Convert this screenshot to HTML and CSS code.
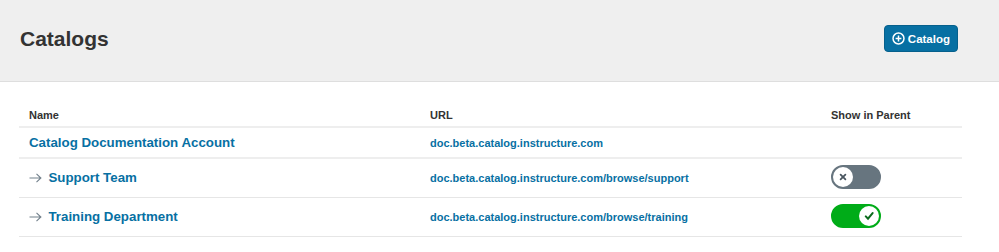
FILE: index.html
```html
<!DOCTYPE html>
<html lang="en">
<head>
    <meta charset="UTF-8">
    <meta name="viewport" content="width=device-width, initial-scale=1.0">
    <title>Catalogs</title>
    <link rel="stylesheet" href="styles.css">
</head>
<body>
    <!-- PAGE HEADER -->
    <div class="page-header">
        <h1>Catalogs</h1>
        <button type="button" class="btn">
            <svg class="btn-icon" viewBox="0 0 14 14" width="13" height="13">
                <circle cx="7" cy="7" r="5.9" fill="none" stroke="#fff" stroke-width="1.6"/>
                <path d="M7 3.9v6.2M3.9 7h6.2" stroke="#fff" stroke-width="1.6"/>
            </svg>
            Catalog
        </button>
    </div>

    <!-- CATALOG LIST -->
    <div class="content">
        <table class="catalogs">
            <thead>
                <tr>
                    <th class="col-name">Name</th>
                    <th class="col-url">URL</th>
                    <th class="col-show">Show in Parent</th>
                </tr>
            </thead>
            <tbody>
                <tr class="root">
                    <td><a href="#" class="name-link">Catalog Documentation Account</a></td>
                    <td><a href="#" class="url-link">doc.beta.catalog.instructure.com</a></td>
                    <td></td>
                </tr>
                <tr>
                    <td>
                        <svg class="arrow" viewBox="0 0 13 10" width="13" height="10">
                            <path d="M0.5 5h11.5M7.5 0.8l4.4 4.2-4.4 4.2" fill="none" stroke="#73818c" stroke-width="1.1"/>
                        </svg>
                        <a href="#" class="name-link">Support Team</a>
                    </td>
                    <td><a href="#" class="url-link">doc.beta.catalog.instructure.com/browse/support</a></td>
                    <td>
                        <span class="toggle off">
                            <span class="knob">
                                <svg viewBox="0 0 10 10" width="8" height="8">
                                    <path d="M2 2l6 6M8 2l-6 6" stroke="#4a5660" stroke-width="2.2" stroke-linecap="round"/>
                                </svg>
                            </span>
                        </span>
                    </td>
                </tr>
                <tr>
                    <td>
                        <svg class="arrow" viewBox="0 0 13 10" width="13" height="10">
                            <path d="M0.5 5h11.5M7.5 0.8l4.4 4.2-4.4 4.2" fill="none" stroke="#73818c" stroke-width="1.1"/>
                        </svg>
                        <a href="#" class="name-link">Training Department</a>
                    </td>
                    <td><a href="#" class="url-link">doc.beta.catalog.instructure.com/browse/training</a></td>
                    <td>
                        <span class="toggle on">
                            <span class="knob">
                                <svg viewBox="0 0 10 10" width="10" height="10">
                                    <path d="M1.8 5.4l2.2 2.3 4.6-5.6" fill="none" stroke="#0b6b1c" stroke-width="2" stroke-linecap="round"/>
                                </svg>
                            </span>
                        </span>
                    </td>
                </tr>
            </tbody>
        </table>
    </div>
</body>
</html>
```

FILE: styles.css
```css
body {
    margin: 0;
    font-family: "Liberation Sans", Arial, sans-serif;
    background: #fff;
    color: #2d3b45;
}
.page-header {
    height: 77px;
    background: #efefef;
    border-bottom: 1px solid #dedede;
    display: flex;
    align-items: center;
    justify-content: space-between;
    padding: 0 41px 4px 20px;
}
.page-header h1 {
    margin: 0;
    font-size: 21px;
    font-weight: bold;
    color: #333;
}
.btn {
    display: flex;
    align-items: center;
    gap: 3px;
    height: 27px;
    padding: 0 7px;
    background: #0770a3;
    color: #fff;
    border: 1px solid #06608c;
    border-radius: 4px;
    font-family: inherit;
    font-size: 11.5px;
    font-weight: bold;
    cursor: pointer;
}
.btn-icon {
    display: block;
}
.content {
    padding: 21px 37px 0 19px;
}
.catalogs {
    width: 100%;
    table-layout: fixed;
    border-collapse: collapse;
}
.catalogs th {
    text-align: left;
    font-size: 11px;
    font-weight: bold;
    color: #333;
    padding: 6px 10px 5px;
    border-bottom: 2px solid #eee;
}
.col-name,
.col-url {
    width: 381px;
}
.catalogs td {
    padding: 6px 10px 8px;
    border-bottom: 1px solid #e6e6e6;
    vertical-align: middle;
    white-space: nowrap;
}
.catalogs tr.root td {
    padding: 5px 10px 6px;
    border-bottom: 2px solid #eee;
}
.name-link {
    font-size: 13.3px;
    font-weight: bold;
    color: #0770a3;
    text-decoration: none;
}
.url-link {
    font-size: 11px;
    font-weight: bold;
    color: #0770a3;
    text-decoration: none;
}
.arrow {
    vertical-align: -1px;
    margin-right: 2px;
}
.toggle {
    display: flex;
    align-items: center;
    box-sizing: border-box;
    width: 50px;
    height: 24px;
    border-radius: 12px;
    border: 2px solid;
}
.toggle .knob {
    width: 20px;
    height: 20px;
    border-radius: 50%;
    background: #fff;
    display: flex;
    align-items: center;
    justify-content: center;
}
.toggle .knob svg {
    display: block;
}
.toggle.off {
    background: #67757f;
    border-color: #67757f;
    justify-content: flex-start;
}
.toggle.on {
    background: #00ac18;
    border-color: #00ac18;
    justify-content: flex-end;
}
```
